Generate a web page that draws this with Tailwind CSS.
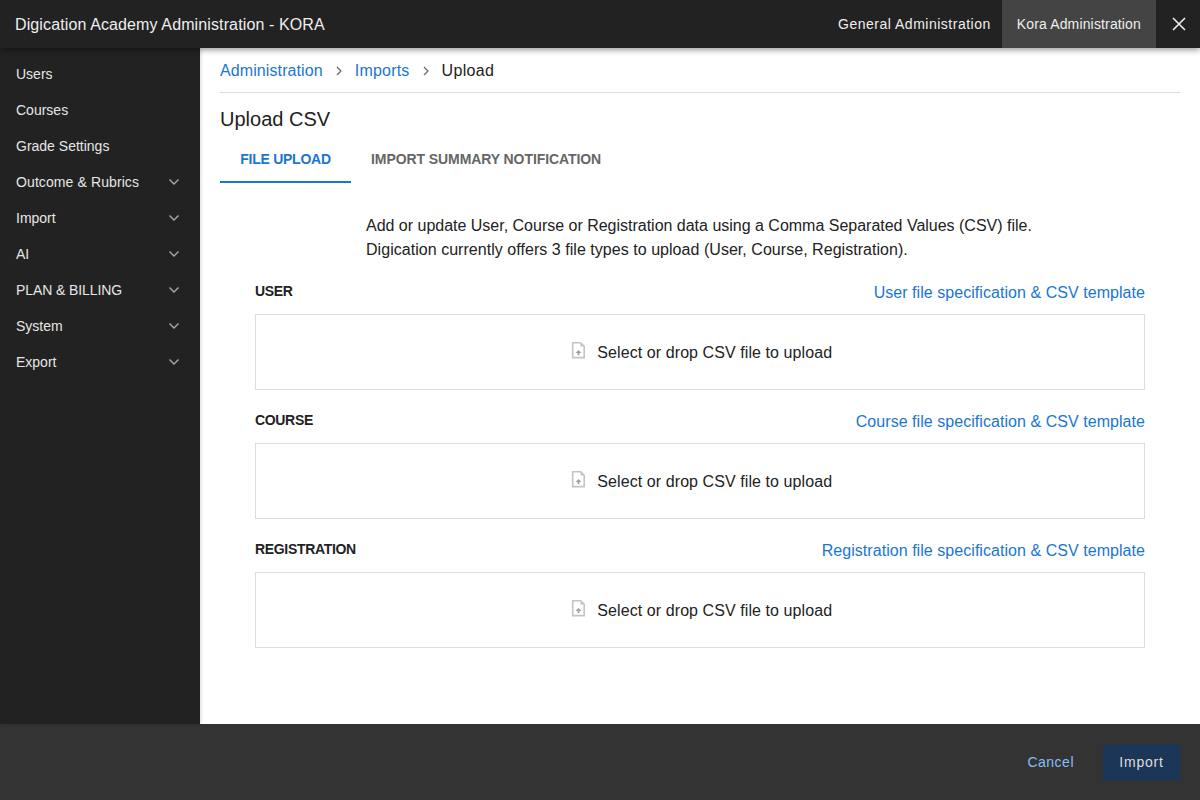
<!DOCTYPE html>
<html lang="en">
<head>
    <meta charset="UTF-8">
    <title>Digication Academy Administration - KORA</title>
    <script src="https://cdn.jsdelivr.net/npm/@tailwindcss/browser@4"></script>
</head>
<body class="h-[800px] w-[1200px] overflow-hidden flex flex-col bg-white font-['Liberation_Sans',Arial,sans-serif] text-[#222]">

    <header class="relative z-10 h-12 shrink-0 flex items-center justify-between bg-[#222] text-[#eee] shadow-[0_2px_6px_rgba(0,0,0,0.4)]">
        <div class="pl-[15px] pt-[2px] text-base tracking-[0.12px]">Digication Academy Administration - KORA</div>
        <div class="flex h-full items-center text-sm">
            <a class="px-[11px] leading-[48px] tracking-[0.5px]">General Administration</a>
            <a class="h-full px-[15px] leading-[48px] bg-[#444] tracking-[0.15px]">Kora Administration</a>
            <button class="w-11 h-full flex items-center justify-center pl-[2px]">
                <svg width="14" height="14" viewBox="0 0 14 14" fill="none" stroke="#eee" stroke-width="1.6"><path d="M1 1l12 12M13 1L1 13"/></svg>
            </button>
        </div>
    </header>

    <div class="flex flex-1 min-h-0">
        <nav class="relative w-[200px] shrink-0 bg-[#222] text-[#e6e6e6] text-sm pt-2 shadow-[1px_0_3px_rgba(0,0,0,0.15)]">
            <div class="h-9 flex items-center pl-4">Users</div>
            <div class="h-9 flex items-center pl-4">Courses</div>
            <div class="h-9 flex items-center pl-4">Grade Settings</div>
            <div class="h-9 flex items-center justify-between pl-4 pr-[20px]"><span class="tracking-[0.1px]">Outcome &amp; Rubrics</span>
                <svg width="12" height="8" viewBox="0 0 12 8" fill="none" stroke="#aaa" stroke-width="1.4"><path d="M1.5 1.5L6 6l4.5-4.5"/></svg>
            </div>
            <div class="h-9 flex items-center justify-between pl-4 pr-[20px]">Import
                <svg width="12" height="8" viewBox="0 0 12 8" fill="none" stroke="#aaa" stroke-width="1.4"><path d="M1.5 1.5L6 6l4.5-4.5"/></svg>
            </div>
            <div class="h-9 flex items-center justify-between pl-4 pr-[20px]">AI
                <svg width="12" height="8" viewBox="0 0 12 8" fill="none" stroke="#aaa" stroke-width="1.4"><path d="M1.5 1.5L6 6l4.5-4.5"/></svg>
            </div>
            <div class="h-9 flex items-center justify-between pl-4 pr-[20px]"><span class="tracking-[-0.1px]">PLAN &amp; BILLING</span>
                <svg width="12" height="8" viewBox="0 0 12 8" fill="none" stroke="#aaa" stroke-width="1.4"><path d="M1.5 1.5L6 6l4.5-4.5"/></svg>
            </div>
            <div class="h-9 flex items-center justify-between pl-4 pr-[20px]">System
                <svg width="12" height="8" viewBox="0 0 12 8" fill="none" stroke="#aaa" stroke-width="1.4"><path d="M1.5 1.5L6 6l4.5-4.5"/></svg>
            </div>
            <div class="h-9 flex items-center justify-between pl-4 pr-[20px]">Export
                <svg width="12" height="8" viewBox="0 0 12 8" fill="none" stroke="#aaa" stroke-width="1.4"><path d="M1.5 1.5L6 6l4.5-4.5"/></svg>
            </div>
        </nav>

        <main class="flex-1 min-w-0 px-5">
            <div class="h-[45px] pt-[2px] flex items-center border-b border-[#ddd] text-base tracking-[0.1px]">
                <a class="text-[#1976d2]">Administration</a>
                <svg class="mx-[13px]" width="6" height="10" viewBox="0 0 6 10" fill="none" stroke="#666" stroke-width="1.2"><path d="M1 1l4 4-4 4"/></svg>
                <a class="text-[#1976d2] tracking-[0.2px]">Imports</a>
                <svg class="mx-[13px]" width="6" height="10" viewBox="0 0 6 10" fill="none" stroke="#666" stroke-width="1.2"><path d="M1 1l4 4-4 4"/></svg>
                <span class="tracking-[0.35px]">Upload</span>
            </div>
            <h1 class="mt-[14px] text-xl leading-[24px]">Upload CSV</h1>
            <div class="mt-[6px] flex text-sm font-bold h-[46px]">
                <div class="w-[131px] flex items-center justify-center text-[#1976d2] border-b-2 border-[#1976d2] tracking-[-0.25px]">FILE UPLOAD</div>
                <div class="px-5 pb-[2px] flex items-center text-[#666] tracking-[-0.08px]">IMPORT SUMMARY NOTIFICATION</div>
            </div>

            <div class="mt-[31px] px-[35px]">
                <p class="pl-[111px] text-base leading-6"><span class="tracking-[-0.01px]">Add or update User, Course or Registration data using a Comma Separated Values (CSV) file.</span><br><span class="tracking-[0.04px]">Digication currently offers 3 file types to upload (User, Course, Registration).</span></p>

                <div class="mt-[18px] h-[24px] flex items-center justify-between">
                    <span class="pb-[2px] text-sm font-bold tracking-[-0.33px]">USER</span>
                    <a class="pt-[2px] text-base text-[#1976d2] tracking-[0.05px]">User file specification &amp; CSV template</a>
                </div>
                <div class="mt-[10px] h-[76px] border border-[#ddd] flex items-center justify-center gap-[9.5px] text-base tracking-[0.08px]">
                    <svg width="20" height="20" viewBox="0 0 20 20" fill="none"><path d="M4.7 0.8h8l3.5 3.5v11.3H4.7z" fill="#fff" stroke="#c4c4c4" stroke-width="1.6"/><path d="M12.5 0.8v3.7h3.7z" fill="#c4c4c4"/><path d="M10.5 13.2V9.5" stroke="#a0a0a0" stroke-width="1.8"/><path d="M7.5 11l3-3 3 3z" fill="#a0a0a0"/></svg>
                    <span class="mt-[2px]">Select or drop CSV file to upload</span>
                </div>

                <div class="mt-[19px] h-[24px] flex items-center justify-between">
                    <span class="pb-[2px] text-sm font-bold tracking-[-0.33px]">COURSE</span>
                    <a class="pt-[2px] text-base text-[#1976d2] tracking-[0.05px]">Course file specification &amp; CSV template</a>
                </div>
                <div class="mt-[10px] h-[76px] border border-[#ddd] flex items-center justify-center gap-[9.5px] text-base tracking-[0.08px]">
                    <svg width="20" height="20" viewBox="0 0 20 20" fill="none"><path d="M4.7 0.8h8l3.5 3.5v11.3H4.7z" fill="#fff" stroke="#c4c4c4" stroke-width="1.6"/><path d="M12.5 0.8v3.7h3.7z" fill="#c4c4c4"/><path d="M10.5 13.2V9.5" stroke="#a0a0a0" stroke-width="1.8"/><path d="M7.5 11l3-3 3 3z" fill="#a0a0a0"/></svg>
                    <span class="mt-[2px]">Select or drop CSV file to upload</span>
                </div>

                <div class="mt-[19px] h-[24px] flex items-center justify-between">
                    <span class="pb-[2px] text-sm font-bold tracking-[-0.33px]">REGISTRATION</span>
                    <a class="pt-[2px] text-base text-[#1976d2] tracking-[0.05px]">Registration file specification &amp; CSV template</a>
                </div>
                <div class="mt-[10px] h-[76px] border border-[#ddd] flex items-center justify-center gap-[9.5px] text-base tracking-[0.08px]">
                    <svg width="20" height="20" viewBox="0 0 20 20" fill="none"><path d="M4.7 0.8h8l3.5 3.5v11.3H4.7z" fill="#fff" stroke="#c4c4c4" stroke-width="1.6"/><path d="M12.5 0.8v3.7h3.7z" fill="#c4c4c4"/><path d="M10.5 13.2V9.5" stroke="#a0a0a0" stroke-width="1.8"/><path d="M7.5 11l3-3 3 3z" fill="#a0a0a0"/></svg>
                    <span class="mt-[2px]">Select or drop CSV file to upload</span>
                </div>
            </div>
        </main>
    </div>

    <footer class="h-[76px] shrink-0 bg-[#333] flex items-center justify-end pr-5 text-sm">
        <a class="mr-[29px] text-[#85c0f2] tracking-[0.5px]">Cancel</a>
        <button class="w-[77px] h-9 rounded-[2px] bg-[#1c3657] text-[#ddd] tracking-[0.8px]">Import</button>
    </footer>

</body>
</html>
